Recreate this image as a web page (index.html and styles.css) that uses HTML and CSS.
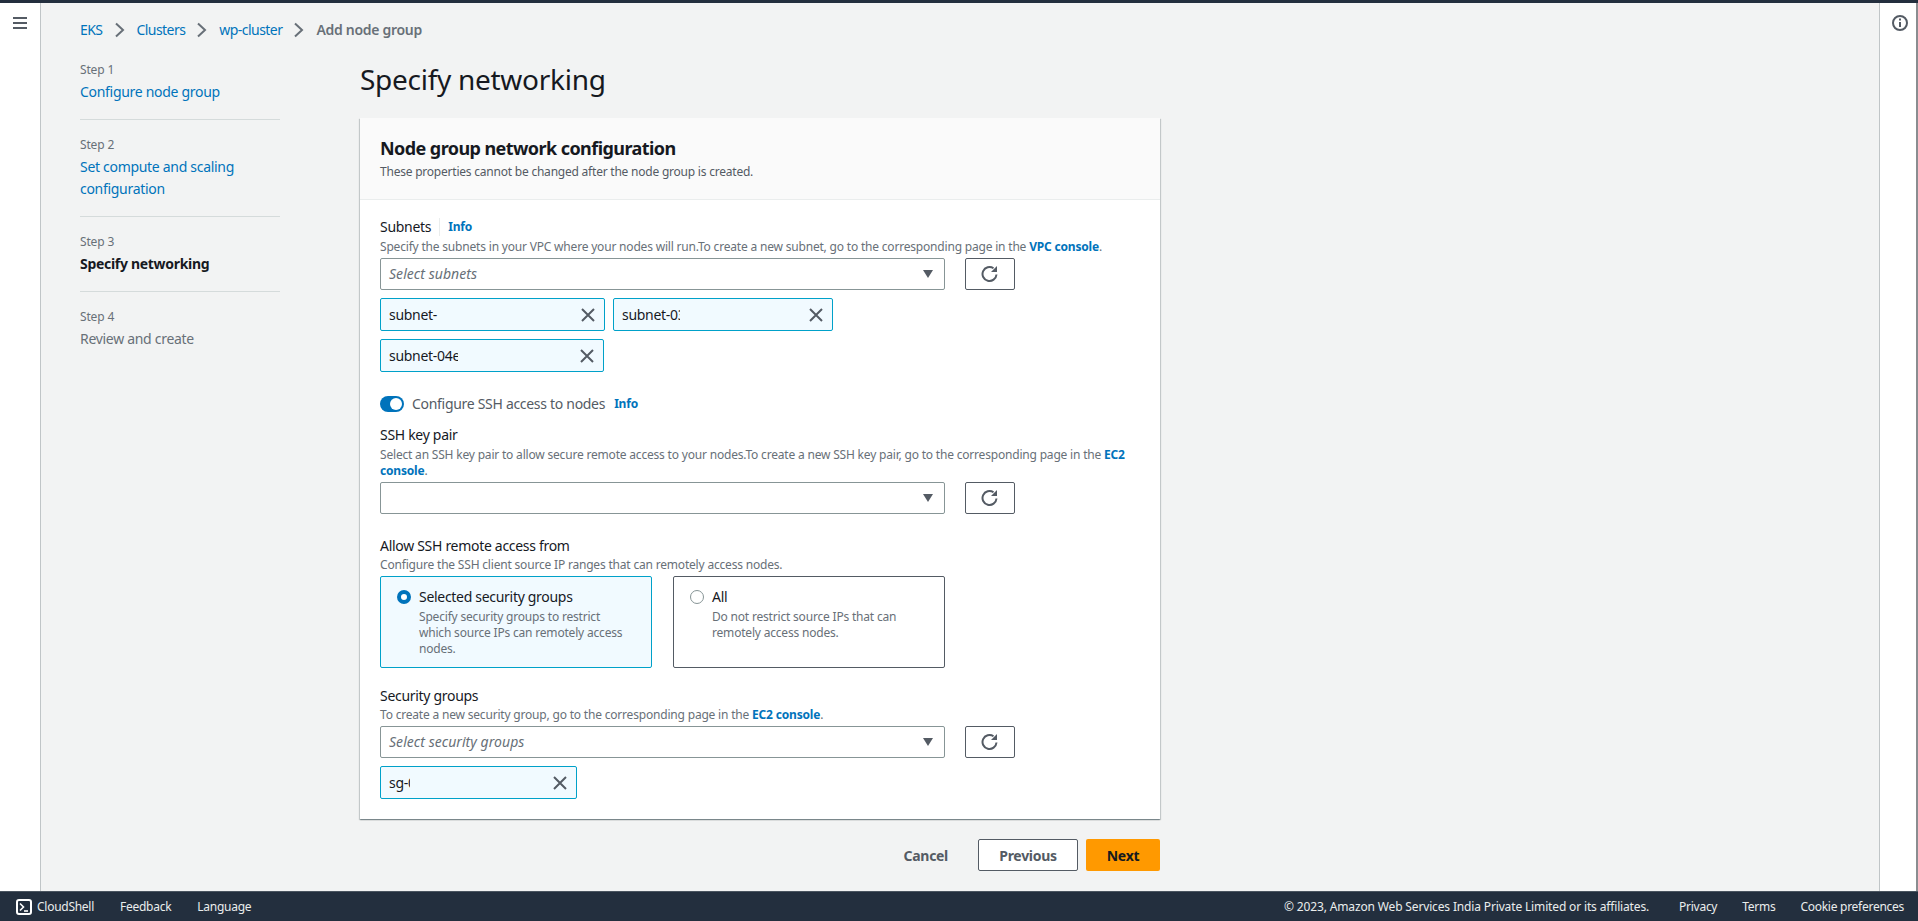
FILE: index.html
```html
<!DOCTYPE html>
<html lang="en">
<head>
<meta charset="utf-8">
<title>Add node group</title>
<link rel="stylesheet" href="styles.css">
</head>
<body>
<div class="topstripe"></div>
<div class="shell">
  <div class="sidenav">
    <svg class="icon-menu" width="16" height="16" viewBox="0 0 16 16"><path d="M1 3h14M1 8h14M1 13h14" fill="none" stroke="#545b64" stroke-width="2"/></svg>
  </div>
  <main class="main">
    <nav class="crumbs">
      <a href="#">EKS</a>
      <svg class="chev" width="10" height="16" viewBox="0 0 10 16"><path d="M1 1.5l7 6.5-7 6.5" fill="none" stroke="#687078" stroke-width="2"/></svg>
      <a href="#">Clusters</a>
      <svg class="chev" width="10" height="16" viewBox="0 0 10 16"><path d="M1 1.5l7 6.5-7 6.5" fill="none" stroke="#687078" stroke-width="2"/></svg>
      <a href="#">wp-cluster</a>
      <svg class="chev" width="10" height="16" viewBox="0 0 10 16"><path d="M1 1.5l7 6.5-7 6.5" fill="none" stroke="#687078" stroke-width="2"/></svg>
      <span class="crumb-current">Add node group</span>
    </nav>
    <div class="wizard">
      <ol class="steps">
        <li class="step"><div class="step-num">Step 1</div><a href="#" class="step-link">Configure node group</a></li>
        <li class="step"><div class="step-num">Step 2</div><a href="#" class="step-link">Set compute and scaling configuration</a></li>
        <li class="step"><div class="step-num">Step 3</div><strong class="step-active">Specify networking</strong></li>
        <li class="step"><div class="step-num">Step 4</div><span class="step-off">Review and create</span></li>
      </ol>
      <div class="content">
        <h1 class="title">Specify networking</h1>
        <section class="card">
          <header class="card-head">
            <h2 class="card-title">Node group network configuration</h2>
            <p class="card-desc">These properties cannot be changed after the node group is created.</p>
          </header>
          <div class="card-body">
            <div class="label-row"><span class="label">Subnets</span><a href="#" class="info info-div">Info</a></div>
            <p class="desc">Specify the subnets in your VPC where your nodes will run.To create a new subnet, go to the corresponding page in the <a href="#" class="info">VPC console</a>.</p>
            <div class="select-row">
              <div class="select"><span class="placeholder">Select subnets</span><svg class="caret" width="12" height="10" viewBox="0 0 12 10"><path d="M1 1h10L6 9z" fill="#545b64"/></svg></div>
              <button class="refresh"><svg width="18" height="18" viewBox="0 0 18 18"><path d="M15.5 9.5A7 7 0 1 1 12.5 3.2" fill="none" stroke="#545b64" stroke-width="2"/><path d="M16 1v6h-6z" fill="#545b64"/></svg></button>
            </div>
            <div class="tokens">
              <div class="token t-a"><span class="token-text tt-a">subnet-</span><svg class="x" width="16" height="16" viewBox="0 0 16 16"><path d="M2 2l12 12M14 2L2 14" fill="none" stroke="#545b64" stroke-width="2"/></svg></div>
              <div class="token t-b"><span class="token-text tt-b">subnet-03</span><svg class="x" width="16" height="16" viewBox="0 0 16 16"><path d="M2 2l12 12M14 2L2 14" fill="none" stroke="#545b64" stroke-width="2"/></svg></div>
              <div class="token t-c"><span class="token-text tt-c">subnet-04e</span><svg class="x" width="16" height="16" viewBox="0 0 16 16"><path d="M2 2l12 12M14 2L2 14" fill="none" stroke="#545b64" stroke-width="2"/></svg></div>
            </div>
            <div class="toggle-row"><span class="toggle"><span class="knob"></span></span><span class="toggle-label">Configure SSH access to nodes</span><a href="#" class="info">Info</a></div>

            <div class="label-row lr-ssh"><span class="label">SSH key pair</span></div>
            <p class="desc">Select an SSH key pair to allow secure remote access to your nodes.To create a new SSH key pair, go to the corresponding page in the <a href="#" class="info">EC2 console</a>.</p>
            <div class="select-row">
              <div class="select"><span class="placeholder"></span><svg class="caret" width="12" height="10" viewBox="0 0 12 10"><path d="M1 1h10L6 9z" fill="#545b64"/></svg></div>
              <button class="refresh"><svg width="18" height="18" viewBox="0 0 18 18"><path d="M15.5 9.5A7 7 0 1 1 12.5 3.2" fill="none" stroke="#545b64" stroke-width="2"/><path d="M16 1v6h-6z" fill="#545b64"/></svg></button>
            </div>

            <div class="label-row lr-allow"><span class="label">Allow SSH remote access from</span></div>
            <p class="desc desc-flush">Configure the SSH client source IP ranges that can remotely access nodes.</p>
            <div class="tiles">
              <div class="tile tile-on">
                <span class="radio radio-on"></span>
                <div class="tile-text"><div class="tile-title">Selected security groups</div><div class="tile-desc">Specify security groups to restrict which source IPs can remotely access nodes.</div></div>
              </div>
              <div class="tile">
                <span class="radio"></span>
                <div class="tile-text"><div class="tile-title">All</div><div class="tile-desc">Do not restrict source IPs that can remotely access nodes.</div></div>
              </div>
            </div>

            <div class="label-row lr-sec"><span class="label">Security groups</span></div>
            <p class="desc desc-flush">To create a new security group, go to the corresponding page in the <a href="#" class="info">EC2 console</a>.</p>
            <div class="select-row">
              <div class="select"><span class="placeholder">Select security groups</span><svg class="caret" width="12" height="10" viewBox="0 0 12 10"><path d="M1 1h10L6 9z" fill="#545b64"/></svg></div>
              <button class="refresh"><svg width="18" height="18" viewBox="0 0 18 18"><path d="M15.5 9.5A7 7 0 1 1 12.5 3.2" fill="none" stroke="#545b64" stroke-width="2"/><path d="M16 1v6h-6z" fill="#545b64"/></svg></button>
            </div>
            <div class="tokens">
              <div class="token t-d"><span class="token-text tt-d">sg-0</span><svg class="x" width="16" height="16" viewBox="0 0 16 16"><path d="M2 2l12 12M14 2L2 14" fill="none" stroke="#545b64" stroke-width="2"/></svg></div>
            </div>
          </div>
        </section>
        <div class="actions">
          <button class="btn-link">Cancel</button>
          <button class="btn btn-prev">Previous</button>
          <button class="btn btn-next">Next</button>
        </div>
      </div>
    </div>
  </main>
  <aside class="tools">
    <svg width="16" height="16" viewBox="0 0 16 16"><circle cx="8" cy="8" r="7" fill="none" stroke="#545b64" stroke-width="2"/><path d="M8 7v5" stroke="#545b64" stroke-width="2"/><path d="M8 3.6v2" stroke="#545b64" stroke-width="2"/></svg>
  </aside>
  <div class="scrollbar"></div>
</div>
<footer class="footer">
  <div class="foot-left">
    <a href="#" class="shell-link"><svg width="16" height="16" viewBox="0 0 16 16"><rect x="1" y="1" width="14" height="14" rx="2" fill="none" stroke="#fff" stroke-width="2"/><path d="M4 4.5L7.5 8 4 11.5" fill="none" stroke="#fff" stroke-width="1.6"/><path d="M8 12h4" stroke="#fff" stroke-width="1.6"/></svg>CloudShell</a>
    <a href="#">Feedback</a>
    <a href="#">Language</a>
  </div>
  <div class="foot-right">
    <span class="copy">© 2023, Amazon Web Services India Private Limited or its affiliates.</span>
    <a href="#">Privacy</a>
    <a href="#">Terms</a>
    <a href="#">Cookie preferences</a>
  </div>
</footer>
</body>
</html>
```
FILE: styles.css
```css
* { box-sizing: border-box; }
html, body { margin: 0; padding: 0; height: 921px; overflow: hidden; }
body { display: flex; flex-direction: column; font-family: "Noto Sans", "Open Sans", sans-serif; font-size: 14px; line-height: 22px; letter-spacing: -0.3px; color: #16191f; background: #f2f3f3; }
a { color: #0073bb; text-decoration: none; }
p, h1, h2, ol { margin: 0; padding: 0; }
button { font-family: inherit; letter-spacing: inherit; cursor: pointer; }

.topstripe { height: 3px; background: #232f3e; flex: none; }
.shell { flex: 1; display: flex; min-height: 0; }
.sidenav { width: 41px; flex: none; background: #fff; border-right: 1px solid #c0c5c7; padding: 12px 0 0 12px; }
.icon-menu { display: block; }
.main { flex: 1; min-width: 0; padding: 16px 0 0 39px; }
.tools { width: 37px; flex: none; background: #fff; border-left: 1px solid #c0c5c7; padding: 12px 0 0 12px; }
.tools svg { display: block; }
.scrollbar { width: 2px; background: #8a8d90; flex: none; }

.crumbs { display: flex; align-items: center; height: 22px; }
.crumbs a { letter-spacing: -0.55px; }
.chev { margin: 0 12px; flex: none; }
.crumb-current { font-weight: 600; color: #687078; }

.wizard { display: flex; margin-top: 21px; }
.steps { list-style: none; width: 200px; margin-right: 80px; flex: none; }
.step { border-bottom: 1px solid #d5dbdb; padding-bottom: 16px; margin-bottom: 17px; }
.step:last-child { border-bottom: 0; }
.step-num { font-size: 12px; line-height: 16px; letter-spacing: -0.15px; color: #687078; margin-bottom: 3px; }
.step-link, .step-active, .step-off { display: block; }
.step-active { font-weight: 700; }
.step-off { color: #687078; }

.content { width: 800px; flex: none; }
.title { font-size: 28px; line-height: 34px; font-weight: 400; letter-spacing: -0.28px; margin-bottom: 22px; }
.card { background: #fff; box-shadow: 0 1px 1px 0 rgba(0,28,36,.3), 1px 1px 1px 0 rgba(0,28,36,.15), -1px 1px 1px 0 rgba(0,28,36,.15); }
.card-head { background: #fafafa; border-bottom: 1px solid #eaeded; padding: 19px 20px 18px; height: 82px; }
.card-title { font-size: 18px; line-height: 22px; font-weight: 700; letter-spacing: -0.57px; }
.card-desc { font-size: 12px; line-height: 16px; letter-spacing: -0.22px; color: #545b64; margin-top: 5px; }
.card-body { padding: 16px 20px 20px; }

.label-row { display: flex; align-items: center; height: 22px; }
.label { font-size: 14px; }
.info { font-size: 12px; font-weight: 700; letter-spacing: -0.19px; color: #0073bb; }
.info-div { border-left: 1px solid #eaeded; margin-left: 8px; padding-left: 8px; line-height: 18px; }
.desc { font-size: 12px; line-height: 16px; letter-spacing: -0.19px; color: #687078; margin: 1px 0 3px; width: 760px; }
.desc-flush { margin-top: 0; }

.select-row { display: flex; gap: 20px; }
.select { width: 565px; height: 32px; border: 1px solid #879596; border-radius: 2px; background: #fff; display: flex; align-items: center; justify-content: space-between; padding: 0 10px 0 8px; }
.placeholder { font-style: italic; letter-spacing: 0.05px; color: #687078; }
.caret { flex: none; }
.refresh { width: 50px; height: 32px; border: 1px solid #545b64; border-radius: 2px; background: #fff; padding: 0; display: flex; align-items: center; justify-content: center; }

.tokens { display: flex; flex-wrap: wrap; gap: 8px; margin-top: 8px; width: 565px; }
.token { height: 33px; border: 1px solid #00a1c9; border-radius: 2px; background: #f1faff; display: flex; align-items: center; justify-content: space-between; padding: 0 8px 0 8px; color: #16191f; }
.t-a { width: 225px; }
.t-b { width: 220px; }
.t-c { width: 224px; }
.t-d { width: 197px; }
.token-text { display: block; overflow: hidden; white-space: nowrap; }
.tt-a { width: 60px; }
.tt-b { width: 58px; }
.tt-c { width: 69px; }
.tt-d { width: 21px; }

.toggle-row { display: flex; align-items: center; margin-top: 23px; height: 17px; }
.toggle { width: 24px; height: 16px; border-radius: 8px; background: #0073bb; position: relative; flex: none; margin-right: 8px; }
.knob { position: absolute; right: 2px; top: 2px; width: 12px; height: 12px; border-radius: 50%; background: #fff; }
.toggle-label { color: #545b64; margin-right: 9px; }

.lr-ssh { margin-top: 12px; }
.lr-allow { margin-top: 21px; }
.lr-sec { margin-top: 17px; }

.tiles { display: flex; gap: 21px; width: 565px; }
.tile { flex: 1; height: 92px; border: 1px solid #545b64; border-radius: 2px; padding: 9px 14px 0 16px; display: flex; gap: 8px; background: #fff; }
.tile-on { border-color: #00a1c9; background: #f1faff; }
.tile-text { width: 205px; }
.radio { width: 14px; height: 14px; border-radius: 50%; border: 1px solid #879596; background: #fff; flex: none; margin-top: 4px; }
.radio-on { border: 4px solid #0073bb; }
.tile-title { line-height: 22px; }
.tile-desc { font-size: 12px; line-height: 16px; letter-spacing: -0.19px; color: #687078; margin-top: 1px; }

.actions { display: flex; justify-content: flex-end; align-items: center; margin-top: 20px; gap: 8px; }
.btn, .btn-link { height: 32px; font-size: 14px; font-weight: 700; border-radius: 2px; padding: 0; }
.btn-link { border: 0; background: none; color: #545b64; margin-right: 22px; }
.btn-prev { width: 100px; border: 1px solid #545b64; background: #fff; color: #545b64; }
.btn-next { width: 74px; border: 0; background: #ff9900; color: #16191f; }

.footer { height: 30px; flex: none; background: #232f3e; border-top: 1px solid #4a5560; display: flex; justify-content: space-between; align-items: center; padding: 0 14px 0 16px; font-size: 12px; line-height: 16px; letter-spacing: -0.15px; color: #eaeded; }
.footer a { color: #eaeded; letter-spacing: -0.27px; }
.foot-left, .foot-right { display: flex; align-items: center; }
.foot-left { gap: 26px; }
.foot-right { gap: 25px; }
.copy { margin-right: 5px; }
.shell-link { display: flex; align-items: center; gap: 5px; }
```
